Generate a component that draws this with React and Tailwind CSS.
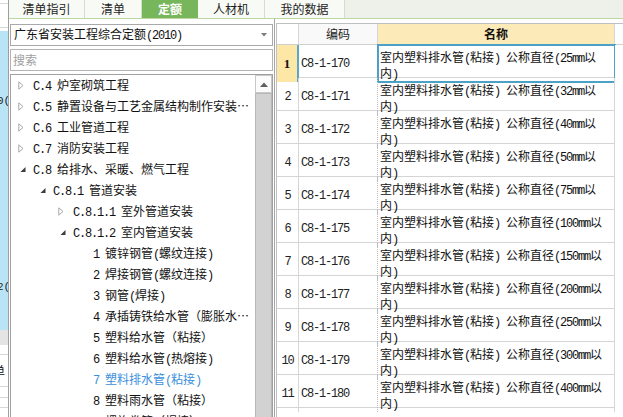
import React from "react";

const MONO = "font-['Liberation_Mono',monospace] text-[12px] tracking-[-1.2px]";

function Mixed({ text }) {
  const parts = text.split(/([\x20-\x7E]+)/);
  return (
    <>
      {parts.map((p, i) =>
        p === "" ? null : /^[\x20-\x7E]+$/.test(p) ? (
          <span key={i} className={MONO + " whitespace-pre"}>
            {p}
          </span>
        ) : (
          <span key={i}>{p}</span>
        )
      )}
    </>
  );
}

const tabs = ["清单指引", "清单", "定额", "人材机", "我的数据"];
const tabW = ["w-[76px]", "w-[57px]", "w-[56px]", "w-[67px]", "w-[80px]"];

const tree = [
  { l: 0, t: "C.4 炉室砌筑工程", s: "c" },
  { l: 0, t: "C.5 静置设备与工艺金属结构制作安装…", s: "c" },
  { l: 0, t: "C.6 工业管道工程", s: "c" },
  { l: 0, t: "C.7 消防安装工程", s: "c" },
  { l: 0, t: "C.8 给排水、采暖、燃气工程", s: "e" },
  { l: 1, t: "C.8.1 管道安装", s: "e" },
  { l: 2, t: "C.8.1.1 室外管道安装", s: "c" },
  { l: 2, t: "C.8.1.2 室内管道安装", s: "e" },
  { l: 3, t: "1 镀锌钢管(螺纹连接)" },
  { l: 3, t: "2 焊接钢管(螺纹连接)" },
  { l: 3, t: "3 钢管(焊接)" },
  { l: 3, t: "4 承插铸铁给水管（膨胀水…" },
  { l: 3, t: "5 塑料给水管（粘接）" },
  { l: 3, t: "6 塑料给水管(热熔接)" },
  { l: 3, t: "7 塑料排水管(粘接)", active: true },
  { l: 3, t: "8 塑料雨水管（粘接）" },
  { l: 3, t: "9 螺旋卷管（焊接）" },
];

const indent = ["pl-[7px]", "pl-[27px]", "pl-[47px]", "pl-[67px]"];

const rows = [
  ["C8-1-170", "25"],
  ["C8-1-171", "32"],
  ["C8-1-172", "40"],
  ["C8-1-173", "50"],
  ["C8-1-174", "75"],
  ["C8-1-175", "100"],
  ["C8-1-176", "150"],
  ["C8-1-177", "200"],
  ["C8-1-178", "250"],
  ["C8-1-179", "300"],
  ["C8-1-180", "400"],
];

function Collapsed() {
  return (
    <svg width="6" height="9" viewBox="0 0 6 9" className="block">
      <path d="M0.8 0.8 L5 4.5 L0.8 8.2 Z" fill="#fff" stroke="#a8a8a8" strokeWidth="1" />
    </svg>
  );
}

function Expanded() {
  return (
    <svg width="6" height="9" viewBox="0 0 6 9" className="block">
      <path d="M5.5 2 L5.5 7 L0.5 7 Z" fill="#3c3c3c" />
    </svg>
  );
}

function Sliver() {
  return (
    <div className="w-[9px] h-full border-r border-[#9e9e9e] flex flex-col overflow-hidden shrink-0">
      <div className="h-[31px] bg-white flex flex-col">
        <div className="h-[4px] border-b border-[#d8d8d8]" />
        <div className="h-[24px] border-b border-[#d8d8d8]" />
      </div>
      <div className="h-[299px] bg-[#b9e4f6] relative">
        <span className="absolute left-[-3px] top-[64px] text-[11px] leading-[12px] text-[#222] font-['Liberation_Mono',monospace]">0(</span>
        <span className="absolute left-[-3px] top-[250px] text-[11px] leading-[12px] text-[#222] font-['Liberation_Mono',monospace]">2(</span>
      </div>
      <div className="h-[15px] bg-[#e4e4e4]" />
      <div className="flex-1 bg-white flex flex-col">
        <div className="h-[10px] border-b border-[#d8d8d8]" />
        <div className="h-[32px] border-b border-[#d8d8d8] flex items-center">
          <span className="ml-[-7px] text-[12px] leading-[12px] text-[#111]">单</span>
        </div>
        <div className="h-[11px] border-b border-[#d8d8d8]" />
        <div className="h-[10px] border-b border-[#d8d8d8]" />
      </div>
    </div>
  );
}

function TabBar() {
  return (
    <div className="h-[19px] flex border-b border-[#bcd6a6] bg-[#eef1ea] shrink-0">
      {tabs.map((t, i) =>
        t === "定额" ? (
          <div
            key={t}
            className={tabW[i] + " h-full flex items-center justify-center bg-[#78b65b] text-white font-bold text-[12px] leading-[12px]"}
          >
            {t}
          </div>
        ) : (
          <div
            key={t}
            className={tabW[i] + " h-full flex items-center justify-center bg-[#f8faf5] border-r border-[#d6dcd0] text-[#1e1e1e] text-[12px] leading-[12px]"}
          >
            {t}
          </div>
        )
      )}
      <div className="flex-1" />
    </div>
  );
}

function LeftPanel() {
  return (
    <div className="w-[265px] shrink-0 flex flex-col pt-[5px] pl-[1px] pr-[1px] bg-white">
      <div className="h-[22px] w-[263px] border border-[#a9a9a9] flex items-center justify-between pl-[3px] pr-[5px] bg-white">
        <span className="text-[12px] leading-[14px] text-[#111] whitespace-nowrap">
          <Mixed text="广东省安装工程综合定额(2010)" />
        </span>
        <svg width="6" height="4" viewBox="0 0 6 4">
          <path d="M0 0 L6 0 L3 3.5 Z" fill="#7a7a7a" />
        </svg>
      </div>
      <div className="h-[22px] w-[263px] mt-[3px] border border-[#b4b4b4] flex items-center pl-[2px] bg-white">
        <span className="text-[12px] leading-[14px] text-[#a0a0a0]">搜索</span>
      </div>
      <div className="mt-[3px] w-[263px] flex-1 min-h-0 border border-[#a0a0a0] border-b-0 flex overflow-hidden">
        <div className="flex-1 min-w-0 flex flex-col overflow-hidden">
          {tree.map((n, i) => (
            <div
              key={i}
              className={
                indent[n.l] +
                " h-[21px] shrink-0 flex items-center whitespace-nowrap text-[12px] leading-[14px] " +
                (n.active ? "text-[#3a8fdc]" : "text-[#111]")
              }
            >
              {n.l < 3 ? (
                <span className={"w-[15px] shrink-0 flex " + (n.s === "e" ? "pl-[2px]" : "")}>
                  {n.s === "e" ? <Expanded /> : <Collapsed />}
                </span>
              ) : (
                <span className="w-[15px] shrink-0" />
              )}
              <span>
                <Mixed text={n.t} />
              </span>
            </div>
          ))}
        </div>
        <div className="w-[17px] shrink-0 flex flex-col bg-[#f0f0f0]">
          <div className="h-[18px] shrink-0 bg-[#fbfbfb] border border-[#c8c8c8] flex items-center justify-center">
            <svg width="8" height="5" viewBox="0 0 8 5">
              <path d="M0 5 L4 0.5 L8 5 Z" fill="#5f5f5f" />
            </svg>
          </div>
          <div className="flex-1 bg-[#d2d2d2] border-l border-r border-t border-[#b8b8b8]" />
        </div>
      </div>
    </div>
  );
}

const COLS = "grid grid-cols-[22px_79px_237px_1fr]";

function RightGrid() {
  return (
    <div className="flex-1 min-w-0 border-l border-[#a4a4a4] pl-[1px] pt-[4px] bg-white flex flex-col">
      <div className="border-t border-[#9c9cac] flex-1 flex flex-col border-l border-[#c0c0c0]">
        <div className={COLS + " h-[21px] border-b border-[#d0d0d0] shrink-0"}>
          <div className="bg-white border-r border-[#d6d6d6]" />
          <div className="bg-[#f9f9f9] border-r border-[#d6d6d6] flex items-center justify-center text-[12px] leading-[14px] text-[#222]">
            编码
          </div>
          <div className="bg-[#fcebb8] border-r border-[#d6d6d6] flex items-center justify-center text-[12px] leading-[14px] font-bold text-[#111]">
            名称
          </div>
          <div className="bg-white" />
        </div>
        {rows.map(([code, d], i) => {
          const first = i === 0;
          return (
            <div key={code} className={COLS + " h-[33px] border-b border-[#d4d4d4] shrink-0"}>
              <div
                className={
                  "flex items-center justify-center " +
                  (first
                    ? "bg-[#fde7a6] border-r-2 border-[#5aa7c9] font-['Liberation_Serif',serif] font-bold text-[13px] text-[#111]"
                    : "border-r border-[#d6d6d6] font-['Liberation_Mono',monospace] text-[12px] tracking-[-1.2px] text-[#222]")
                }
              >
                {i + 1}
              </div>
              <div className="border-r border-dotted border-[#bdbdbd] flex items-center pl-[2px] text-[#222]">
                <span className={MONO}>{code}</span>
              </div>
              <div
                className={
                  "border-r border-[#d6d6d6] pl-[2px] pt-[5px] text-[12px] leading-[13px] text-[#111] whitespace-nowrap " +
                  (first ? "outline-2 outline-solid outline-[#4ba2c6] -outline-offset-1" : "")
                }
              >
                <Mixed text={"室内塑料排水管(粘接) 公称直径(" + d + "mm以"} />
                <br />
                <Mixed text="内)" />
              </div>
              <div className="bg-white" />
            </div>
          );
        })}
        <div className="flex-1" />
      </div>
    </div>
  );
}

export default function App() {
  return (
    <div className="w-[623px] h-[417px] overflow-hidden flex bg-white font-['Noto_Sans_CJK_SC',sans-serif] text-[12px] text-[#1a1a1a]">
      <Sliver />
      <div className="flex-1 min-w-0 flex flex-col">
        <TabBar />
        <div className="flex flex-1 min-h-0">
          <LeftPanel />
          <RightGrid />
        </div>
      </div>
    </div>
  );
}
